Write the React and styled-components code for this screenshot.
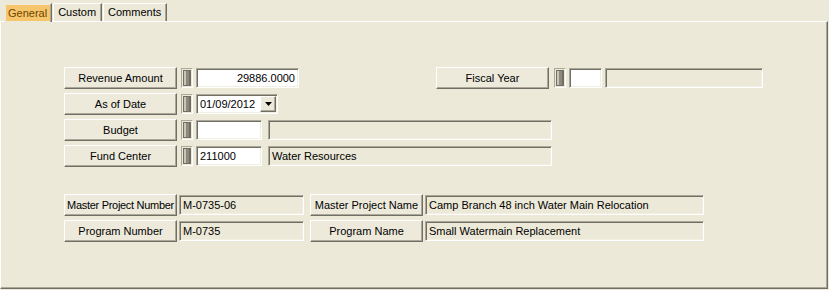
import React from "react";
import styled, { createGlobalStyle } from "styled-components";

const Global = createGlobalStyle`
  html, body { margin: 0; padding: 0; background: #ECE9D8; }
  body {
    font-family: "Liberation Sans", Arial, sans-serif;
    font-size: 11px;
    color: #000;
  }
`;

const Window = styled.div`
  width: 829px;
  height: 290px;
  display: flex;
  flex-direction: column;
  background: #ECE9D8;
`;

const TabStrip = styled.div`
  display: flex;
  align-items: flex-end;
  height: 21px;
  padding-left: 4px;
  position: relative;
  z-index: 1;
`;

const Tab = styled.div`
  box-sizing: border-box;
  height: ${(p) => (p.$active ? "19px" : "18px")};
  margin-left: ${(p) => p.$ml || 0}px;
  margin-bottom: ${(p) => (p.$active ? "-1px" : "0")};
  display: flex;
  align-items: ${(p) => (p.$active ? "flex-start" : "center")};
  padding: ${(p) => (p.$active ? "1px 0 0 1px" : "0 5px 0 4px")};
  background: #ECE9D8;
  border-top: 1px solid ${(p) => (p.$active ? "#ECE9D8" : "#fff")};
  border-left: 1px solid ${(p) => (p.$active ? "#ECE9D8" : "#fff")};
  border-right: 1px solid #716F64;
  box-shadow: inset -1px 0 0 #ACA899;
  white-space: nowrap;
  color: #000;
  line-height: 13px;
`;

const TabLabel = styled.span`
  display: block;
  height: 16px;
  line-height: 16px;
  padding: 0 3px 0 2px;
  margin-right: 1px;
  background: #F7C66C;
  color: #6A4500;
`;

const Panel = styled.div`
  box-sizing: border-box;
  width: 828px;
  height: 268px;
  border-top: 1px solid #fff;
  border-left: 1px solid #fff;
  border-right: 1px solid #716F64;
  border-bottom: 1px solid #716F64;
  box-shadow: inset -1px -1px 0 #ACA899;
  padding: 45px 0 0 63px;
  display: flex;
  flex-direction: column;
`;

const Group = styled.div`
  display: flex;
  flex-direction: column;
  gap: 4px;
  margin-top: ${(p) => p.$mt || 0}px;
`;

const Row = styled.div`
  display: flex;
  align-items: center;
  height: 22px;
`;

const Cluster = styled.div`
  display: flex;
  align-items: center;
  height: 22px;
  margin-left: ${(p) => p.$ml || 0}px;
`;

const FieldButton = styled.div`
  box-sizing: border-box;
  width: 113px;
  height: 22px;
  margin-left: ${(p) => p.$ml || 0}px;
  flex: none;
  display: flex;
  align-items: center;
  justify-content: center;
  white-space: nowrap;
  letter-spacing: ${(p) => (p.$tight ? "-0.3px" : "0")};
  background: #EDEADC;
  border-top: 1px solid #fff;
  border-left: 1px solid #fff;
  border-right: 1px solid #716F64;
  border-bottom: 1px solid #716F64;
  box-shadow: inset -1px -1px 0 #ACA899;
  color: #000;
`;

const Indicator = styled.div`
  box-sizing: border-box;
  width: 12px;
  height: 20px;
  margin-left: ${(p) => p.$ml || 4}px;
  flex: none;
  padding: 1px;
  border-top: 1px solid #ACA899;
  border-left: 1px solid #ACA899;
  border-right: 1px solid #fff;
  border-bottom: 1px solid #fff;
  display: flex;
`;

const IndicatorBar = styled.div`
  flex: 1;
  border: 1px solid #716F64;
  background: linear-gradient(to right, #C9C6B8 0 2px, #8C897D 2px 5px, #6F6D64 5px);
`;

const sunken = `
  box-sizing: border-box;
  height: 20px;
  flex: none;
  display: flex;
  align-items: center;
  white-space: nowrap;
  overflow: hidden;
  border-top: 1px solid #ACA899;
  border-left: 1px solid #ACA899;
  border-right: 1px solid #fff;
  border-bottom: 1px solid #fff;
  box-shadow: inset 1px 1px 0 #716F64, inset -1px -1px 0 #F1EFE2;
`;

const TextBox = styled.div`
  ${sunken}
  width: ${(p) => p.$w}px;
  margin-left: ${(p) => p.$ml || 3}px;
  background: #fff;
  justify-content: ${(p) => (p.$right ? "flex-end" : "flex-start")};
  padding: ${(p) => (p.$right ? "0 3px 0 2px" : "0 2px 0 3px")};
`;

const ReadOnly = styled.div`
  ${sunken}
  width: ${(p) => p.$w}px;
  margin-left: ${(p) => p.$ml || 0}px;
  background: #ECE9D8;
  padding: 0 2px 0 3px;
`;

const Combo = styled.div`
  ${sunken}
  width: ${(p) => p.$w}px;
  margin-left: ${(p) => p.$ml || 3}px;
  background: #fff;
  padding: 0 1px 0 3px;
  justify-content: space-between;
`;

const DropButton = styled.div`
  box-sizing: border-box;
  width: 16px;
  height: 16px;
  flex: none;
  display: flex;
  align-items: center;
  justify-content: center;
  background: #ECE9D8;
  border-top: 1px solid #fff;
  border-left: 1px solid #fff;
  border-right: 1px solid #716F64;
  border-bottom: 1px solid #716F64;
  box-shadow: inset -1px -1px 0 #ACA899;
`;

const Arrow = () => (
  <svg width="7" height="4" viewBox="0 0 7 4">
    <path d="M0 0h7L3.5 4z" fill="#000" />
  </svg>
);

export default function App() {
  return (
    <>
      <Global />
      <Window>
        <TabStrip>
          <Tab $active>
            <TabLabel>General</TabLabel>
          </Tab>
          <Tab $ml={1}>Custom</Tab>
          <Tab $ml={1}>Comments</Tab>
        </TabStrip>
        <Panel>
          <Group>
            <Row>
              <FieldButton>Revenue Amount</FieldButton>
              <Indicator><IndicatorBar /></Indicator>
              <TextBox $w={103} $right>29886.0000</TextBox>
              <Cluster $ml={137}>
                <FieldButton>Fiscal Year</FieldButton>
                <Indicator $ml={5}><IndicatorBar /></Indicator>
                <TextBox $w={33} />
                <ReadOnly $w={158} $ml={3} />
              </Cluster>
            </Row>
            <Row>
              <FieldButton>As of Date</FieldButton>
              <Indicator><IndicatorBar /></Indicator>
              <Combo $w={82}>
                <span>01/09/2012</span>
                <DropButton><Arrow /></DropButton>
              </Combo>
            </Row>
            <Row>
              <FieldButton>Budget</FieldButton>
              <Indicator><IndicatorBar /></Indicator>
              <TextBox $w={66} />
              <ReadOnly $w={284} $ml={6} />
            </Row>
            <Row>
              <FieldButton>Fund Center</FieldButton>
              <Indicator><IndicatorBar /></Indicator>
              <TextBox $w={66}>211000</TextBox>
              <ReadOnly $w={284} $ml={6}>Water Resources</ReadOnly>
            </Row>
          </Group>
          <Group $mt={27}>
            <Row>
              <FieldButton $tight>Master Project Number</FieldButton>
              <ReadOnly $w={125} $ml={2}>M-0735-06</ReadOnly>
              <FieldButton $ml={6}>Master Project Name</FieldButton>
              <ReadOnly $w={279} $ml={2}>Camp Branch 48 inch Water Main Relocation</ReadOnly>
            </Row>
            <Row>
              <FieldButton>Program Number</FieldButton>
              <ReadOnly $w={125} $ml={2}>M-0735</ReadOnly>
              <FieldButton $ml={6}>Program Name</FieldButton>
              <ReadOnly $w={279} $ml={2}>Small Watermain Replacement</ReadOnly>
            </Row>
          </Group>
        </Panel>
      </Window>
    </>
  );
}
